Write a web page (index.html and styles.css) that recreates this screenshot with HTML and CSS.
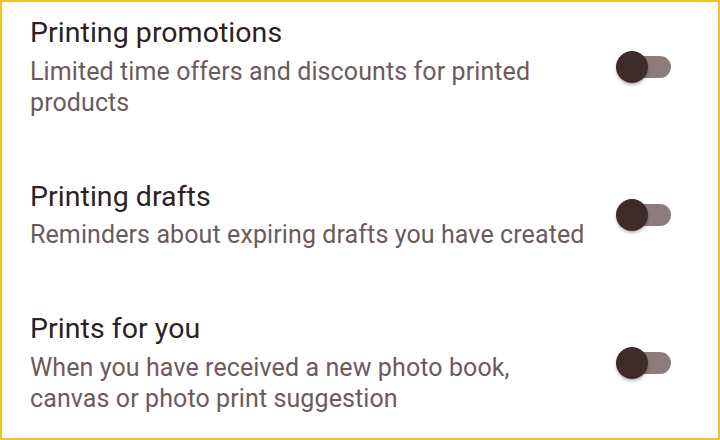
FILE: index.html
```html
<!DOCTYPE html>
<html lang="en">
<head>
<meta charset="utf-8">
<title>Notifications</title>
<link rel="stylesheet" href="styles.css">
</head>
<body>
<div class="frame">
  <ul class="list">
    <li class="item">
      <div class="text">
        <div class="title">Printing promotions</div>
        <div class="sub">Limited time offers and discounts for printed<br>products</div>
      </div>
      <span class="switch" role="switch" aria-checked="false"><span class="track"></span><span class="thumb"></span></span>
    </li>
    <li class="item">
      <div class="text">
        <div class="title">Printing drafts</div>
        <div class="sub">Reminders about expiring drafts you have created</div>
      </div>
      <span class="switch" role="switch" aria-checked="false"><span class="track"></span><span class="thumb"></span></span>
    </li>
    <li class="item">
      <div class="text">
        <div class="title">Prints for you</div>
        <div class="sub">When you have received a new photo book,<br>canvas or photo print suggestion</div>
      </div>
      <span class="switch" role="switch" aria-checked="false"><span class="track"></span><span class="thumb"></span></span>
    </li>
  </ul>
</div>
</body>
</html>
```
FILE: styles.css
```css
html, body {
  margin: 0;
  padding: 0;
  background: #ffffff;
}
.frame {
  width: 720px;
  height: 440px;
  box-sizing: border-box;
  border: 2px solid #f7c12c;
  background: #ffffff;
  font-family: Roboto, "Liberation Sans", sans-serif;
  overflow: hidden;
}
.list {
  list-style: none;
  margin: 0;
  padding: 14px 0 0 28px;
  display: flex;
  flex-direction: column;
  gap: 62px;
}
.item {
  display: flex;
  align-items: center;
  justify-content: space-between;
  padding-right: 47px;
}
.title {
  font-size: 28.5px;
  line-height: 34px;
  color: #2d2122;
  letter-spacing: 0.05px;
}
.sub {
  margin-top: 5.5px;
  font-size: 25px;
  line-height: 31px;
  color: #6c5b5c;
  letter-spacing: 0.1px;
}
.switch {
  position: relative;
  width: 55px;
  height: 32px;
  flex: none;
}
.track {
  position: absolute;
  right: 0;
  top: 5px;
  width: 40px;
  height: 22px;
  border-radius: 11px;
  background: #8e7b7c;
}
.thumb {
  position: absolute;
  left: 0;
  top: 0;
  width: 32px;
  height: 32px;
  border-radius: 50%;
  background: #3e2c2d;
  box-shadow: 0 2px 3px rgba(0, 0, 0, 0.28);
}
```
